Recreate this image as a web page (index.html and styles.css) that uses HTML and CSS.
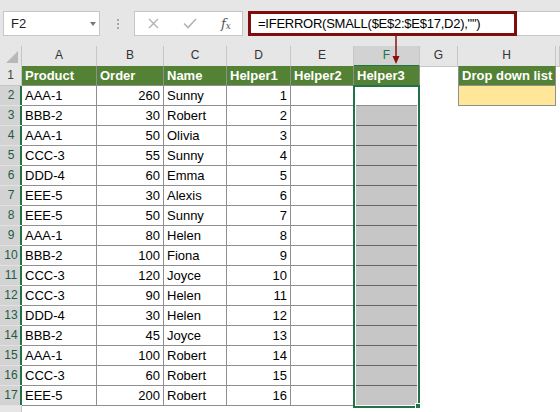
FILE: index.html
```html
<!DOCTYPE html>
<html lang="en">

<head>
    <meta charset="UTF-8">
    <title>Helper3 formula</title>
    <link rel="stylesheet" href="styles.css">
</head>

<body>
    <div class="app">
        <div class="toolbar">
            <div class="namebox"><span>F2</span><i class="caret"></i></div>
            <div class="grip"><i></i><i></i><i></i></div>
            <div class="fbuttons">
                <svg class="cancel" width="11" height="11" viewBox="0 0 11 11">
                    <path d="M1 1L10 10M10 1L1 10" stroke="#b3b3b3" stroke-width="1.4" fill="none" />
                </svg>
                <svg class="enter" width="14" height="11" viewBox="0 0 14 11">
                    <path d="M1 5.5L5 9.5L13 1" stroke="#b3b3b3" stroke-width="1.6" fill="none" />
                </svg>
                <span class="fx">f<sub>x</sub></span>
            </div>
            <div class="formula">
                <span>=IFERROR(SMALL($E$2:$E$17,D2),"")</span>
                <div class="callout"></div>
            </div>
        </div>

        <svg class="arrow" width="12" height="29" viewBox="0 0 12 29">
            <path d="M6 0V22" stroke="#8a1010" stroke-width="1.5" />
            <path d="M2.5 20H9.5L6 28Z" fill="#8a1010" />
        </svg>

        <div class="sheet">
            <div class="row colhead">
                <div class="corner"><i></i></div>
                <div>A</div>
                <div>B</div>
                <div>C</div>
                <div>D</div>
                <div>E</div>
                <div class="active">F</div>
                <div>G</div>
                <div>H</div>
                <div></div>
            </div>

            <div class="row">
                <div class="rh">1</div>
                <div class="c hd">Product</div>
                <div class="c hd">Order</div>
                <div class="c hd">Name</div>
                <div class="c hd">Helper1</div>
                <div class="c hd">Helper2</div>
                <div class="c hd">Helper3</div>
                <div></div>
                <div class="dl">Drop down list</div>
                <div></div>
            </div>

            <div class="row">
                <div class="rh on">2</div>
                <div class="c">AAA-1</div>
                <div class="c num">260</div>
                <div class="c">Sunny</div>
                <div class="c num">1</div>
                <div class="c"></div>
                <div class="c"></div>
                <div></div>
                <div class="dd"></div>
                <div></div>
            </div>

            <div class="row">
                <div class="rh on">3</div>
                <div class="c">BBB-2</div>
                <div class="c num">30</div>
                <div class="c">Robert</div>
                <div class="c num">2</div>
                <div class="c"></div>
                <div class="c shade"></div>
            </div>

            <div class="row">
                <div class="rh on">4</div>
                <div class="c">AAA-1</div>
                <div class="c num">50</div>
                <div class="c">Olivia</div>
                <div class="c num">3</div>
                <div class="c"></div>
                <div class="c shade"></div>
            </div>

            <div class="row">
                <div class="rh on">5</div>
                <div class="c">CCC-3</div>
                <div class="c num">55</div>
                <div class="c">Sunny</div>
                <div class="c num">4</div>
                <div class="c"></div>
                <div class="c shade"></div>
            </div>

            <div class="row">
                <div class="rh on">6</div>
                <div class="c">DDD-4</div>
                <div class="c num">60</div>
                <div class="c">Emma</div>
                <div class="c num">5</div>
                <div class="c"></div>
                <div class="c shade"></div>
            </div>

            <div class="row">
                <div class="rh on">7</div>
                <div class="c">EEE-5</div>
                <div class="c num">30</div>
                <div class="c">Alexis</div>
                <div class="c num">6</div>
                <div class="c"></div>
                <div class="c shade"></div>
            </div>

            <div class="row">
                <div class="rh on">8</div>
                <div class="c">EEE-5</div>
                <div class="c num">50</div>
                <div class="c">Sunny</div>
                <div class="c num">7</div>
                <div class="c"></div>
                <div class="c shade"></div>
            </div>

            <div class="row">
                <div class="rh on">9</div>
                <div class="c">AAA-1</div>
                <div class="c num">80</div>
                <div class="c">Helen</div>
                <div class="c num">8</div>
                <div class="c"></div>
                <div class="c shade"></div>
            </div>

            <div class="row">
                <div class="rh on">10</div>
                <div class="c">BBB-2</div>
                <div class="c num">100</div>
                <div class="c">Fiona</div>
                <div class="c num">9</div>
                <div class="c"></div>
                <div class="c shade"></div>
            </div>

            <div class="row">
                <div class="rh on">11</div>
                <div class="c">CCC-3</div>
                <div class="c num">120</div>
                <div class="c">Joyce</div>
                <div class="c num">10</div>
                <div class="c"></div>
                <div class="c shade"></div>
            </div>

            <div class="row">
                <div class="rh on">12</div>
                <div class="c">CCC-3</div>
                <div class="c num">90</div>
                <div class="c">Helen</div>
                <div class="c num">11</div>
                <div class="c"></div>
                <div class="c shade"></div>
            </div>

            <div class="row">
                <div class="rh on">13</div>
                <div class="c">DDD-4</div>
                <div class="c num">30</div>
                <div class="c">Helen</div>
                <div class="c num">12</div>
                <div class="c"></div>
                <div class="c shade"></div>
            </div>

            <div class="row">
                <div class="rh on">14</div>
                <div class="c">BBB-2</div>
                <div class="c num">45</div>
                <div class="c">Joyce</div>
                <div class="c num">13</div>
                <div class="c"></div>
                <div class="c shade"></div>
            </div>

            <div class="row">
                <div class="rh on">15</div>
                <div class="c">AAA-1</div>
                <div class="c num">100</div>
                <div class="c">Robert</div>
                <div class="c num">14</div>
                <div class="c"></div>
                <div class="c shade"></div>
            </div>

            <div class="row">
                <div class="rh on">16</div>
                <div class="c">CCC-3</div>
                <div class="c num">60</div>
                <div class="c">Robert</div>
                <div class="c num">15</div>
                <div class="c"></div>
                <div class="c shade"></div>
            </div>

            <div class="row">
                <div class="rh on">17</div>
                <div class="c">EEE-5</div>
                <div class="c num">200</div>
                <div class="c">Robert</div>
                <div class="c num">16</div>
                <div class="c"></div>
                <div class="c shade"></div>
            </div>

            <div class="row">
                <div class="rh"></div>
            </div>

            <div class="selection"><i class="handle"></i></div>
        </div>
    </div>
</body>

</html>
```

FILE: styles.css
```css
* {
    margin: 0;
    padding: 0;
    box-sizing: border-box;
}

body {
    width: 560px;
    height: 412px;
    overflow: hidden;
    background-color: #fff;
    font-family: "Liberation Sans", Arial, sans-serif;
    font-size: 13px;
    color: #000;
}

.app {
    position: relative;
}

/* formula bar */

.toolbar {
    height: 46px;
    display: flex;
    align-items: flex-start;
    padding: 11px 0 0 3px;
    background-color: #e6e6e6;
}

.namebox {
    width: 97px;
    height: 25px;
    display: flex;
    align-items: center;
    justify-content: space-between;
    padding: 0 3px 0 7px;
    background-color: #fff;
    border: 1px solid #c6c6c6;
    color: #222;
}

.caret {
    border-left: 3.5px solid transparent;
    border-right: 3.5px solid transparent;
    border-top: 4px solid #777;
}

.grip {
    width: 34px;
    display: flex;
    flex-direction: column;
    align-items: center;
    gap: 2px;
    padding: 8px 0 0 1px;
}

.grip i {
    width: 2px;
    height: 2px;
    background-color: #a8a8a8;
}

.fbuttons {
    width: 109px;
    height: 25px;
    display: flex;
    align-items: center;
    padding-left: 13px;
    background-color: #fff;
    border: 1px solid #c6c6c6;
}

.enter {
    margin-left: 24px;
}

.fx {
    margin-left: 24px;
    font-family: "DejaVu Serif", serif;
    font-style: italic;
    font-size: 13px;
    color: #555;
}

.fx sub {
    font-size: 9px;
    vertical-align: -1px;
}

.formula {
    flex: 1;
    height: 25px;
    margin-left: 5px;
    padding-left: 9px;
    position: relative;
    background-color: #fff;
    border: 1px solid #c6c6c6;
    border-right: none;
    line-height: 23px;
    letter-spacing: -0.25px;
    white-space: nowrap;
}

.callout {
    position: absolute;
    left: -1px;
    top: -1px;
    width: 269px;
    height: 25px;
    border: 3px solid #800c0c;
}

.arrow {
    position: absolute;
    left: 390px;
    top: 36px;
    z-index: 5;
}

/* grid */

.sheet {
    position: relative;
}

.row {
    display: grid;
    grid-template-columns: 22px 75px 67px 63px 64px 63px 66px 38px 98px 1fr;
    height: 20px;
}

.colhead {
    background-color: #e6e6e6;
}

.colhead div {
    border-right: 1px solid #c6c6c6;
    border-bottom: 1px solid #c6c6c6;
    text-align: center;
    font-size: 12px;
    line-height: 19px;
    color: #333;
}

.colhead .active {
    background-color: #d2d2d2;
    border-bottom: 2px solid #217346;
    color: #217346;
}

.colhead .corner {
    display: flex;
    align-items: flex-end;
    justify-content: flex-end;
    padding: 0 3px 3px 0;
}

.corner i {
    width: 12px;
    height: 12px;
    background-color: #b8b8b8;
    clip-path: polygon(100% 0, 100% 100%, 0 100%);
}

.rh {
    background-color: #e6e6e6;
    border-right: 1px solid #c6c6c6;
    border-bottom: 1px solid #c6c6c6;
    text-align: center;
    font-size: 12px;
    line-height: 19px;
    color: #444;
}

.rh.on {
    background-color: #d3d3d3;
    border-right: none;
    box-shadow: inset -2px 0 0 #217346;
    border-bottom-color: #e2e2e2;
    color: #1d5c44;
}

.c {
    border-right: 1px solid #8f8f8f;
    border-bottom: 1px solid #8f8f8f;
    padding: 0 3px;
    line-height: 19px;
    white-space: nowrap;
    overflow: hidden;
}

.num {
    text-align: right;
}

.hd,
.dl {
    background-color: #548235;
    color: #fff;
    font-weight: bold;
}

.shade {
    background-color: #c6c6c6;
    border-bottom-color: #666;
}

.dl,
.dd {
    border: 1px solid #8f8f8f;
    border-top: none;
    padding: 0 3px;
    line-height: 19px;
    white-space: nowrap;
}

.dd {
    background-color: #ffe699;
}

.selection {
    position: absolute;
    left: 353px;
    top: 39px;
    width: 67px;
    height: 323px;
    border: 2px solid #217346;
    box-shadow: inset 0 0 0 1px #fff;
}

.handle {
    position: absolute;
    right: -3px;
    bottom: -3px;
    width: 6px;
    height: 6px;
    background-color: #217346;
    border: 1px solid #fff;
}
```
